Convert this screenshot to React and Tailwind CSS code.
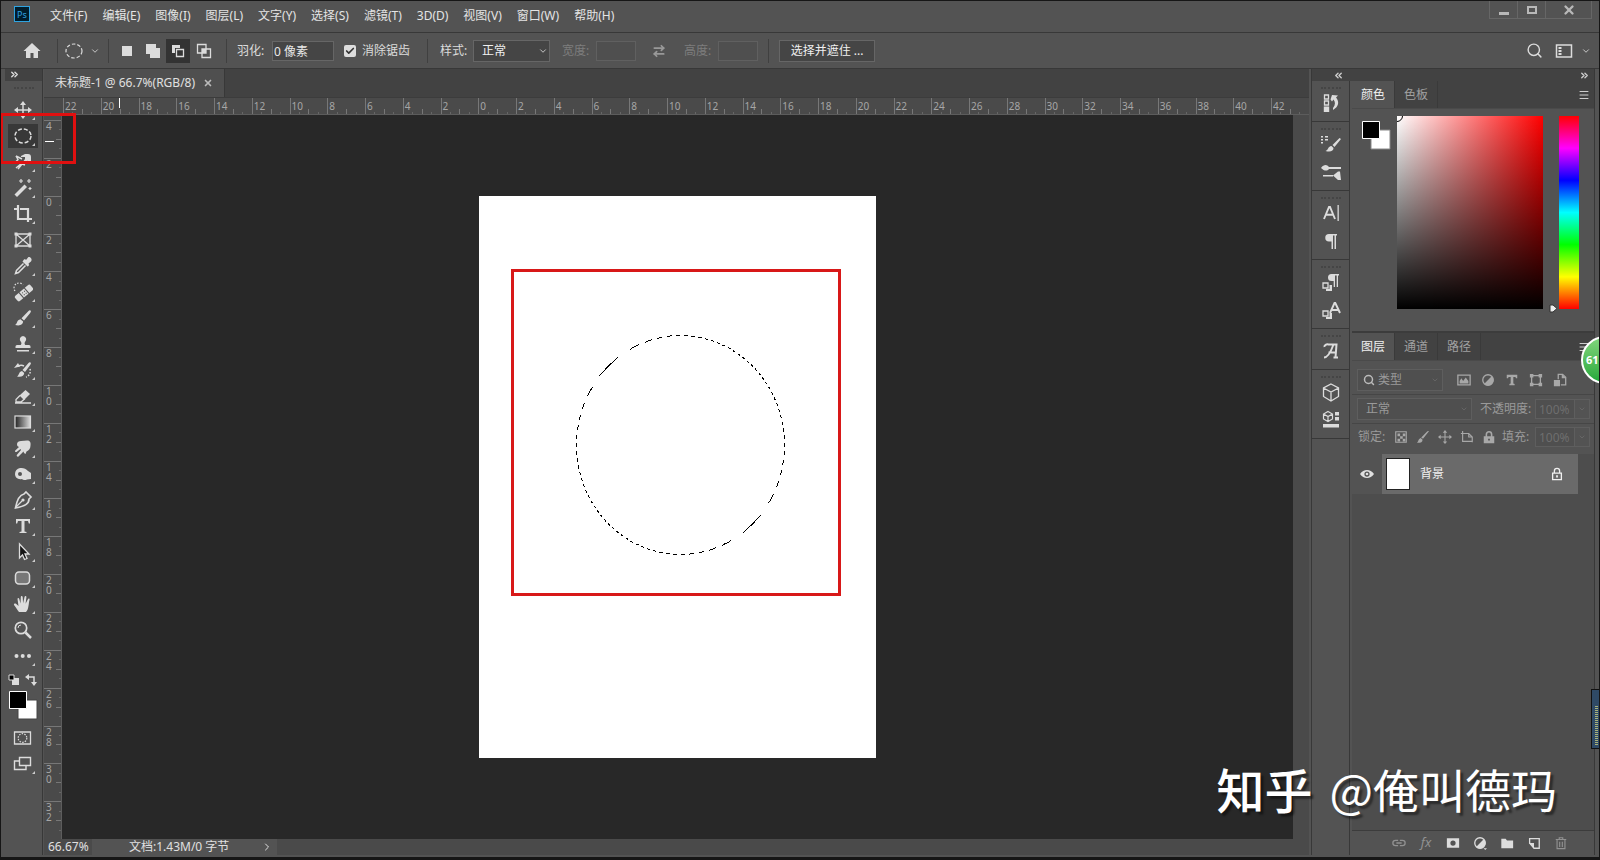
import React, { useState } from 'react';
import { ArrowRightLeft, Check, ChevronDown, ChevronRight, ChevronsLeft, ChevronsRight, Menu, Search, X } from 'lucide-react';

const menus = ['文件(F)', '编辑(E)', '图像(I)', '图层(L)', '文字(Y)', '选择(S)', '滤镜(T)', '3D(D)', '视图(V)', '窗口(W)', '帮助(H)'];

const hRuler = Array.from({ length: 33 }, (_, i) => Math.abs(i * 2 - 22));
const vRuler = Array.from({ length: 19 }, (_, i) => Math.abs(i * 2 - 4));

const line = { fill: 'none', stroke: 'currentColor', strokeWidth: 1.5 };

const Icon = ({ children, className = 'w-5 h-5', box = '0 0 20 20' }) => (
  <svg viewBox={box} className={`shrink-0 ${className}`} fill="currentColor" aria-hidden="true">{children}</svg>
);

const tools = [
  { name: '移动工具', art: <><path d="M10 4v12M3 10h14" {...line} /><path d="M10 1l3 4H7zM10 19l3-4H7zM1 10l4-3v6zM19 10l-4-3v6z" /></> },
  { name: '椭圆选框工具', art: <ellipse cx="10" cy="10" rx="8" ry="7" {...line} strokeDasharray="4 2" /> },
  { name: '套索工具', art: <><path d="M3 4l6 3M3 4l2 3.500-3 3 7 .5M5 17l4-5 3 1M9 11l-6 5" {...line} /><path fillRule="evenodd" d="M8 4l4-2h3a3 3 0 013 3v6h-3.500V8.500L12 11H9l3-4V5H8z" /></> },
  { name: '魔棒工具', art: <><path d="M1.500 16.500l10-10 2.500 2.500-10 10z" /><path d="M8 1v4M6 3h4M16 1v4M14 3h4M17 9v3M15.500 10.500h3" {...line} strokeWidth="1.200" /></> },
  { name: '裁剪工具', art: <path d="M5 1v14h10M1 5h3M7 5h8v13M16 15h3" {...line} strokeWidth="2.200" /> },
  { name: '图框工具', plain: true, art: <><path d="M3 4h14v12H3zM3 4l14 12M17 4L3 16" {...line} strokeWidth="1.300" /><path d="M1.500 2.500h3v3h-3zM15.500 2.500h3v3h-3zM1.500 14.500h3v3h-3zM15.500 14.500h3v3h-3z" /></> },
  { name: '吸管工具', art: <><path d="M11 3.500c1-.5 2 .5 2 .5l2-2.500c1.500-1.500 5 1.500 3 4L15.500 7.500s1 1.500 0 2.500l-1 .5-5-5z" /><path d="M10.500 7.500l-7 7-1 3 3-1 7-7" {...line} /></> },
  { name: '修复画笔', art: <><g transform="rotate(-40 11 11)"><path d="M3 7.500h4v7H3a2 2 0 01-2-2v-3a2 2 0 012-2zM15 7.500h4a2 2 0 012 2v3a2 2 0 01-2 2h-4z" /><path d="M8 7.500h6v7H8z" /><path d="M9.500 9.500h1v1h-1zM12 9.500h1v1h-1zM9.500 12h1v1h-1zM12 12h1v1h-1z" fill="#444" /></g><path d="M2 9a5 5 0 018-6" {...line} strokeDasharray="1.500 1.500" strokeWidth="1.200" /></> },
  { name: '画笔工具', art: <><path d="M17.500 2.500c1 .8 0 2-.5 2.700L11 12.500 8.500 10.300 15.500 3c.6-.6 1.300-1 2-.5z" /><path d="M7.500 11.200l2.600 2.400c0 3-3 4.800-8.100 3.400 2.500-1 1.500-5.200 5.500-5.800z" /></> },
  { name: '仿制图章', art: <><path d="M10 2a3.400 3.400 0 012 6c-.7 1-.5 2 .3 3H16a1.500 1.500 0 011.500 1.500V14h-15v-1.500A1.500 1.500 0 014 11h3.700c.8-1 1-2 .3-3a3.400 3.400 0 012-6z" /><path d="M4 16h12v1.500H4z" /></> },
  { name: '历史记录画笔', art: <><path d="M17.500 2.500c1 .8 0 2-.5 2.700L12 12l-2.500-2L15.500 3c.6-.6 1.300-1 2-.5zM9 11l2.200 2c0 3-3 4.500-7.200 3.500 2.300-1 1.500-4.700 5-5.500zM1 8l4-5 2 3.500z" /><path d="M5 6.500c2-1.500 4-1.500 6-.5" {...line} /><path d="M17 9c1 4-1 7-4 8" {...line} strokeDasharray="1.500 1.500" /></> },
  { name: '橡皮擦', art: <><path d="M12.500 4L17 8l-6 6-4.500-4.500z" /><path d="M7 9.500L3 13.500V16h5l4-3.500M2 17h16" {...line} strokeWidth="1.300" /></> },
  { name: '渐变工具', art: <><defs><linearGradient id="toolGrad"><stop offset="0" stopColor="#222" /><stop offset="1" stopColor="#ddd" /></linearGradient></defs><rect x="2" y="4" width="15.500" height="12" fill="url(#toolGrad)" stroke="currentColor" strokeWidth="1.200" /></> },
  { name: '涂抹工具', art: <path d="M4 6c0-2 2-3 4-3l6-.5c3 0 4 2 3.500 5 0 3-1.500 5-4 6l-1 2.500-1.500-1-.5-1.500-5 5c-1 .8-2.500-.5-1.500-1.700L8 12l-.5-1-4 3c-1.200.5-2-.8-1-1.700L6 9C4.500 8.500 4 7.500 4 6z" /> },
  { name: '减淡工具', art: <path fillRule="evenodd" d="M7 4c3-.5 6 .5 8 3l3 2v6l-4 .5c-2 1-4 .5-5-.5-4 1-7-1.500-7-5s2-5.500 5-6zm0 4a2 2 0 100 4 2 2 0 000-4z" /> },
  { name: '钢笔工具', art: <><path d="M13 2l5 5-2 2c0 5-4 7-13.500 9C4 10 6 5 11 4z" {...line} strokeWidth="1.700" /><path d="M3 17l6-6" {...line} strokeWidth="1.200" /><circle cx="10" cy="10" r="1.600" /></> },
  { name: '文字工具', art: <path d="M3 3h14v4.500h-1.200L15 5h-3.500v10.500l2 .5v1h-7v-1l2-.5V5H5l-.8 2.500H3z" /> },
  { name: '路径选择', art: <path d="M6.500 2v14l3-3 2 4.500 2.500-1-2-4.500h4z" fill="#151515" stroke="currentColor" strokeWidth="1.300" /> },
  { name: '圆角矩形', art: <rect x="2.500" y="4" width="14" height="12" rx="3.500" fill="#777" stroke="currentColor" strokeWidth="1.500" /> },
  { name: '抓手工具', art: <path d="M6 18c-2-2-3-5-5-7-.5-1.300 1-2 2-1.200L5.500 12 4.500 5c0-1.300 1.500-1.300 1.800 0L7.500 9.500 7.800 3c0-1.500 1.700-1.500 1.900 0l.4 6.200L11.500 3c.3-1.400 2-1.200 1.900.2l-.8 6.500 2.300-4.500c.6-1.200 2-.6 1.600.7C15.500 9 16 15 13 18z" /> },
  { name: '缩放工具', plain: true, art: <><circle cx="8" cy="8" r="5.700" {...line} strokeWidth="1.700" /><path d="M12.500 12.500L18 18" {...line} strokeWidth="2.500" /><path d="M5 8a3 3 0 013-3" {...line} strokeWidth="1" /></> },
  { name: '编辑工具栏', art: <><circle cx="3.500" cy="10" r="2" /><circle cx="9.700" cy="10" r="2" /><circle cx="16" cy="10" r="2" /></> },
];

const ToolButton = ({ tool, active, onClick }) => (
  <button aria-label={tool.name} onClick={onClick} className={`relative flex items-center justify-center w-[30px] h-[26px] shrink-0 border-y border-[#535353] ${active ? 'bg-[#383838]' : ''}`}>
    <Icon>{tool.art}</Icon>
    {!tool.plain && (
      <svg viewBox="0 0 4 4" className="absolute right-[3px] bottom-[2px] w-[3px] h-[3px]" fill="#ccc"><path d="M4 0v4H0z" /></svg>
    )}
  </button>
);

const styleBoxes = (
  <><path d="M2 11h5v5H2z" {...line} strokeWidth="1.300" /><path d="M8.500 13H11v6H5v-2h3.500z" /></>
);

const dockGroups = [
  [{ name: '历史记录', art: <><path d="M3.500 2h4v4h-4zM3.500 8h4v4h-4z" {...line} strokeWidth="1.300" /><path d="M2.800 13.500h5.400V19H2.800zM9.500 6.500L11 2l6 .5-2 2c3.500 4 3 9-3 12.500v-2c2.500-3 2.500-6 .5-8.500L11 8.500z" /></> }],
  [
    { name: '画笔设置', art: <><path d="M0 2h2v1.500H0zM4 2h3v1.500H4zM0 5h2v1.500H0zM4 5h3v1.500H4zM0 8h2v1.500H0z" /><path d="M20 5l-6.500 8-2-2 7-7zM10.500 12l2 2c0 3-3 4.500-8 3 3-.7 2-4.500 6-5z" /></> },
    { name: '画笔', art: <><path d="M0 6c3-4 6-3.500 8-1h12v2H8C6 9.500 3 9 0 6zM2 13h10v1.500H2zM12 13.500l5-4h2l1 8.500h-3z" /></> },
  ],
  [
    { name: '字符', art: <><path d="M3 16L8 4h1l5 12M5 11.700h7" {...line} strokeWidth="1.900" /><path d="M16.500 2h1.300v16h-1.300z" /></> },
    { name: '段落', art: <path d="M8 3h8v1.500h-1V18h-1.500V4.500H12V18h-1.500v-7.500H8A3.700 3.700 0 018 3z" /> },
  ],
  [
    { name: '段落样式', art: <><path d="M10.500 2H18v1.500h-1V15h-1.300V3.500H14V15h-1.300V9h-2.200a3.500 3.500 0 010-7z" />{styleBoxes}</> },
    { name: '字符样式', art: <><path d="M9 13L13.500 3h.8L19 13M11 10h6" {...line} strokeWidth="1.900" />{styleBoxes}</> },
  ],
  [{ name: '字形', art: <path d="M3.500 6c-.5-2 2-3 4-2.500h8L14.500 16.500M12.500 16.500h4.500M12.500 3.500C10.500 9 7 16.500 3 16.500M7.500 11.500h7" {...line} strokeWidth="2" /> }],
  [
    { name: '3D', art: <path d="M10 2l7.500 4v8.500L10 19l-7.500-4.500V6zM2.500 6l7.500 4 7.500-4M10 10v9" {...line} strokeWidth="1.300" /> },
    { name: '库', art: <><path d="M7 1.500l4.500 2.500v5L7 11.500 2.500 9V4zM2.500 4L7 6.500 11.500 4M7 6.500v5" {...line} strokeWidth="1.200" /><path d="M14 2h4v3.500h-4zM14 7h4v3.500h-4zM2 14h16v3.500H2z" /></> },
  ],
];

const Divider = ({ className = '' }) => <span className={`w-px h-6 bg-[#404040] shrink-0 ${className}`} />;

const Grip = () => <div className="h-2 w-5 mx-auto border-b-2 border-dotted border-[#454545]" />;

const MenuBar = () => (
  <header className="flex items-start h-8 border-b border-[#383838]">
    <div className="ml-[13px] mt-[5px] w-4 h-4 flex items-center justify-center border border-[#2fa3e0] bg-[#001d2c] text-[#2fa3e0] text-[9px] leading-none">Ps</div>
    <nav className="flex h-[29px] items-center gap-[15px] ml-5">
      {menus.map((item) => (
        <button key={item} className="text-[#e4e4e4]">{item}</button>
      ))}
    </nav>
    <div className="ml-auto mr-[7px] flex h-[18px] text-[#b8b8b8] border border-t-0 border-[#666]">
      <button aria-label="最小化" className="w-7 flex items-center justify-center border-r border-[#666]"><Icon className="w-3 h-3" box="0 0 12 12"><path d="M1 8h10v3H1z" /></Icon></button>
      <button aria-label="最大化" className="w-7 flex items-center justify-center border-r border-[#666]"><Icon className="w-3 h-3" box="0 0 12 12"><path d="M2 3h8v6H2z" fill="none" stroke="currentColor" strokeWidth="2" /></Icon></button>
      <button aria-label="关闭" className="w-[45px] flex items-center justify-center"><X className="w-[14px] h-[14px]" strokeWidth={4} /></button>
    </div>
  </header>
);

const OptionsBar = () => {
  const [feather, setFeather] = useState('0 像素');
  const [antialias, setAntialias] = useState(true);

  return (
    <div className="flex items-center h-9 text-[#dcdcdc] border-b border-[#383838]">
      <button aria-label="主页" className="ml-[21px]"><Icon><path d="M10 2l8.500 8H16v7h-4.500v-5h-3v5H4v-7H1.500z" /></Icon></button>
      <Divider className="ml-[15px]" />
      <button aria-label="工具预设" className="flex items-center ml-[6px] gap-[6px]">
        <Icon><ellipse cx="10" cy="10" rx="8" ry="7" {...line} strokeWidth="1.200" strokeDasharray="3.500 2" /></Icon>
        <ChevronDown className="w-[10px] h-[10px]" />
      </button>
      <Divider className="ml-2" />
      <button aria-label="新选区" className="ml-[5px] w-[26px] h-6 flex items-center justify-center"><Icon className="w-4 h-4" box="0 0 16 16"><path d="M3 3h10v10H3z" /></Icon></button>
      <button aria-label="添加到选区" className="w-[26px] h-6 flex items-center justify-center"><Icon className="w-4 h-4" box="0 0 16 16"><path d="M1 1h10v4h4v10H5v-4H1z" /></Icon></button>
      <button aria-label="从选区减去" className="w-6 h-6 flex items-center justify-center bg-[#333]"><Icon className="w-4 h-4" box="0 0 16 16"><path d="M2 2h8v3H5v5H2z" /><path d="M6.500 6.500h7v7h-7z" {...line} strokeWidth="1.300" /></Icon></button>
      <button aria-label="与选区交叉" className="w-7 h-6 flex items-center justify-center"><Icon className="w-4 h-4" box="0 0 16 16"><path d="M1.500 1.500h8.500V10H1.500zM6 6h8.500v8.500H6z" {...line} strokeWidth="1.300" /><path d="M6 6h4v4H6z" /></Icon></button>
      <Divider className="ml-2" />
      <label htmlFor="feather" className="ml-[10px] w-[35px]">羽化:</label>
      <input id="feather" value={feather} onChange={(e) => setFeather(e.target.value)} className="w-[62px] h-5 px-px bg-[#454545] border border-[#666] text-[#e8e8e8] outline-none" />
      <label className="flex items-center ml-[10px] gap-[6px]">
        <span className="grid place-items-center">
          <input type="checkbox" checked={antialias} onChange={() => setAntialias(!antialias)} className="appearance-none w-3 h-3 rounded-[2px] bg-[#ddd] col-start-1 row-start-1" />
          {antialias && <Check className="w-[10px] h-[10px] text-[#333] col-start-1 row-start-1 pointer-events-none" strokeWidth={4} />}
        </span>
        消除锯齿
      </label>
      <Divider className="ml-[17px]" />
      <label htmlFor="style" className="ml-3 w-[33px]">样式:</label>
      <span className="grid items-center">
        <select id="style" className="appearance-none col-start-1 row-start-1 w-[77px] h-[22px] px-2 bg-[#454545] border border-[#666] text-[#f0f0f0] outline-none">
          <option>正常</option>
        </select>
        <ChevronDown className="w-[10px] h-[10px] mr-[2px] justify-self-end col-start-1 row-start-1 pointer-events-none" />
      </span>
      <label htmlFor="width" className="ml-3 w-[34px] text-[#7d7d7d]">宽度:</label>
      <input id="width" disabled className="w-10 h-5 border border-[#606060] bg-[#4f4f4f]" />
      <ArrowRightLeft className="ml-4 w-[14px] h-[14px] text-[#999]" strokeWidth={3} />
      <label htmlFor="height" className="ml-[18px] w-[34px] text-[#7d7d7d]">高度:</label>
      <input id="height" disabled className="w-10 h-5 border border-[#606060] bg-[#4f4f4f]" />
      <Divider className="ml-[10px]" />
      <button className="ml-[10px] w-24 h-[22px] bg-[#454545] border border-[#666] text-[#f0f0f0]">选择并遮住 ...</button>
      <div className="ml-auto mr-2 flex items-center gap-3">
        <button aria-label="搜索"><Search className="w-[17px] h-[17px]" /></button>
        <button aria-label="工作区" className="flex items-center gap-2">
          <Icon className="w-[18px] h-[18px]" box="0 0 18 18"><path d="M1.500 3h15v12h-15z" {...line} /><path d="M3.500 5h3v2h-3zM3.500 8h3v2h-3zM3.500 11h3v2h-3z" /></Icon>
          <ChevronDown className="w-[10px] h-[10px]" />
        </button>
      </div>
    </div>
  );
};

const Toolbar = () => {
  const [active, setActive] = useState(1);

  return (
    <aside className="flex flex-col w-[38px] shrink-0 border-r border-[#383838] text-[#dcdcdc]">
      <div className="h-3 shrink-0 bg-[#424242]"><ChevronsRight className="ml-1 w-[11px] h-[11px]" strokeWidth={3} /></div>
      <div className="h-4 shrink-0"><Grip /></div>
      <div className="flex flex-col pl-[3px]">
        {tools.map((tool, i) => (
          <ToolButton key={tool.name} tool={tool} active={i === active} onClick={() => setActive(i)} />
        ))}
        <div className="flex items-center h-[21px] gap-[5px]">
          <button aria-label="默认颜色"><Icon className="w-3 h-3" box="0 0 12 12"><path d="M4 4h7v7H4z" /><path d="M1 1h5v5H1z" fill="#000" stroke="#ddd" /></Icon></button>
          <button aria-label="切换颜色"><Icon className="w-3 h-3" box="0 0 12 12"><path d="M3 3h6v6" {...line} /><path d="M0 3l4-3v6zM9 12L6 8h6z" /></Icon></button>
        </div>
        <button aria-label="前景色和背景色"><Icon className="w-[30px] h-[30px]" box="0 0 30 30"><path d="M10 10h19v19H10z" fill="#fff" stroke="#444" /><path d="M1.500 1.500h17v17h-17z" fill="#000" stroke="#fff" /></Icon></button>
        <div className="pt-[5px]">
          <ToolButton tool={{ name: '快速蒙版', plain: true, art: <><path d="M1.500 4h16v12h-16z" {...line} strokeWidth="1.300" /><circle cx="9.500" cy="10" r="4.300" {...line} strokeDasharray="1.500 1.200" strokeWidth="1.200" /></> }} />
          <ToolButton tool={{ name: '屏幕模式', art: <><path d="M6.500 3.500h11v8h-11zM6 7H1.500v8.500H13V12" {...line} strokeWidth="1.400" /></> }} />
        </div>
      </div>
    </aside>
  );
};

const MarchingAnts = () => (
  <svg className="absolute inset-0 w-full h-full" viewBox="0 0 397 562" shapeRendering="crispEdges">
    <defs>
      <linearGradient id="ants" gradientUnits="userSpaceOnUse" spreadMethod="repeat" x1="0.250" y1="0.250" x2="4.250" y2="4.250">
        <stop offset="0" stopColor="#000" />
        <stop offset="0.500" stopColor="#000" />
        <stop offset="0.500" stopColor="#fff" />
        <stop offset="1" stopColor="#fff" />
      </linearGradient>
    </defs>
    <ellipse cx="201.500" cy="249" rx="104" ry="109.500" fill="none" stroke="url(#ants)" />
  </svg>
);

const Workspace = () => (
  <main className="flex flex-col flex-1 min-w-0 ml-px">
    <div className="flex h-7 bg-[#424242]">
      <div className="flex items-center gap-2 px-[11px] bg-[#4f4f4f] text-[#e0e0e0] border-r border-[#383838]">
        未标题-1 @ 66.7%(RGB/8)
        <button aria-label="关闭文档"><X className="w-[10px] h-[10px] text-[#bbb]" strokeWidth={4} /></button>
      </div>
    </div>
    <div className="relative flex h-[18px] pl-[19px] bg-[#4a4a4a] border-y border-[#5c5c5c] border-t-[#3c3c3c] text-[10px] leading-4 text-[#a6a6a6] overflow-hidden">
      {hRuler.map((n, i) => (
        <div key={i} className="grid flex-1 min-w-0 border-l border-[#777]">
          <span className="col-start-1 row-start-1 pl-px">{n}</span>
          <span className="col-start-1 row-start-1 self-end flex items-end">
            <i className="flex-1" /><i className="flex-1 h-[2px] border-l border-[#666]" /><i className="flex-1 h-[5px] border-l border-[#777]" /><i className="flex-1 h-[2px] border-l border-[#666]" />
          </span>
        </div>
      ))}
      <span className="absolute left-[75px] top-0 w-px h-[10px] bg-white" />
    </div>
    <div className="flex flex-1 min-h-0">
      <div className="relative flex flex-col w-[18px] shrink-0 pt-[5px] bg-[#4a4a4a] border-r border-[#5c5c5c] text-[10px] leading-[10px] text-[#a6a6a6]">
        {vRuler.map((n, i) => (
          <div key={i} className="grid flex-1 min-h-0 border-t border-[#777]">
            <span className="col-start-1 row-start-1 ml-[2px] w-[7px] break-all">{n}</span>
            <span className="col-start-1 row-start-1 justify-self-end flex flex-col items-end">
              <i className="flex-1" /><i className="flex-1 w-[2px] border-t border-[#666]" /><i className="flex-1 w-[5px] border-t border-[#777]" /><i className="flex-1 w-[2px] border-t border-[#666]" />
            </span>
          </div>
        ))}
        <span className="absolute left-px top-[26px] w-[9px] h-px bg-white" />
      </div>
      <div className="flex flex-1 items-center justify-center bg-[#282828] overflow-hidden">
        <div className="relative w-[397px] h-[562px] shrink-0 bg-white">
          <MarchingAnts />
          <div className="absolute left-8 top-[73px] w-[330px] h-[327px] border-3 border-[#d81818]" />
        </div>
      </div>
      <div className="w-4 shrink-0 bg-[#4a4a4a]" />
    </div>
    <footer className="flex items-center h-4 bg-[#4a4a4a] text-[#e0e0e0]">
      <span className="w-12 pl-1">66.67%</span>
      <div className="flex items-center justify-between w-[185px] h-full pl-[37px] pr-1 bg-[#535353]">
        <span>文档:1.43M/0 字节</span>
        <button aria-label="文档信息"><ChevronRight className="w-3 h-3" /></button>
      </div>
    </footer>
  </main>
);

const Dock = () => (
  <div className="flex flex-col w-[38px] text-[#dcdcdc] border-r border-[#383838]">
    {dockGroups.map((group, i) => (
      <div key={i} className="flex flex-col items-center pb-1 border-b border-[#383838]">
        <Grip />
        {group.map((item) => (
          <button key={item.name} aria-label={item.name} className="h-7 flex items-center"><Icon>{item.art}</Icon></button>
        ))}
      </div>
    ))}
  </div>
);

const PanelTabs = ({ tabs }) => (
  <div role="tablist" className="flex items-stretch h-7 bg-[#424242] border-b border-[#4a4a4a]">
    {tabs.map((tab, i) => (
      <button key={tab} role="tab" aria-selected={i === 0} className={`px-[9px] border-r border-[#3a3a3a] ${i === 0 ? 'bg-[#535353] text-[#f0f0f0]' : 'text-[#a0a0a0]'}`}>{tab}</button>
    ))}
    <button aria-label="面板菜单" className="ml-auto mr-1"><Menu className="w-3 h-3 text-[#ccc]" /></button>
  </div>
);

const ColorPanel = () => (
  <section className="border-b-2 border-[#3c3c3c]">
    <PanelTabs tabs={['颜色', '色板']} />
    <div className="flex items-start pt-[7px] pb-[18px] pl-[9px]">
      <button aria-label="前景色和背景色" className="mt-1"><Icon className="w-[30px] h-[30px]" box="0 0 30 30"><path d="M10 10h19v19H10z" fill="#fff" stroke="#888" /><path d="M1.500 1.500h17v17h-17z" fill="#000" stroke="#fff" /></Icon></button>
      <div className="relative flex-1 h-[193px] ml-[6px] overflow-hidden bg-[linear-gradient(to_bottom,transparent,#000),linear-gradient(to_right,#fff,#f00)]">
        <span className="absolute -left-[6px] -top-[6px] w-3 h-3 rounded-full border border-black" />
      </div>
      <Icon className="w-[9px] h-[9px] ml-[6px] mt-[188px]" box="0 0 9 9"><path d="M1 1h3l4 3.500L4 8H1z" fill="#eee" stroke="#333" /></Icon>
      <div className="w-5 h-[193px] ml-px mr-[15px] bg-[linear-gradient(to_bottom,#f00,#f0f,#00f,#0ff,#0f0,#ff0,#f00)]" />
    </div>
  </section>
);

const PercentField = ({ id, label }) => (
  <>
    <label htmlFor={id}>{label}:</label>
    <span className="flex ml-auto">
      <input id={id} disabled value="100%" readOnly className="w-10 h-5 pl-[3px] border border-[#5e5e5e] bg-[#4f4f4f] text-[#6e6e6e]" />
      <button aria-label={`${label}滑块`} className="w-[15px] h-5 border border-l-0 border-[#5e5e5e] flex items-center justify-center"><ChevronDown className="w-2 h-2 text-[#707070]" /></button>
    </span>
  </>
);

const filterIcons = [
  { name: '像素图层', art: <><path d="M1 2.500h14v11H1z" {...line} /><path d="M3 12V9l2-3 2 3 3-4 3 4v3z" /></> },
  { name: '调整图层', art: <><circle cx="8" cy="8" r="6" {...line} /><path d="M12.500 3.500a6.300 6.300 0 01-9 9z" /></> },
  { name: '文字图层', art: <path d="M2 2h12v4h-1.500L12 4.500H9.500V12l1.500.5V14H5v-1.500l1.500-.5V4.500H4L3.500 6H2z" /> },
  { name: '形状图层', art: <><path d="M3 3h10v10H3z" {...line} /><path d="M1 1h4v4H1zM11 1h4v4h-4zM1 11h4v4H1zM11 11h4v4h-4z" /></> },
  { name: '智能对象', art: <><path d="M6 7V1.500h5L14.500 5v8.500H9" {...line} /><path d="M1 8h7v7H1zM10 1v5h5z" /></> },
];

const lockIcons = [
  { name: '锁定透明像素', art: <><path d="M2 2h12v12H2z" {...line} strokeWidth="1.300" /><path d="M4 4h3v3H4zM10 4h3v3h-3zM7 7h3v3H7zM4 10h3v3H4zM10 10h3v3h-3z" /></> },
  { name: '锁定图像像素', art: <path d="M15 1L8 10 6 8.500l7-7zM5.500 9l2 2c0 3-3 4-6.500 3.500C3 13 2.500 10 5.500 9z" /> },
  { name: '锁定位置', art: <><path d="M8 2v12M2 8h12" {...line} strokeWidth="1.200" /><path d="M8 0l2.500 3h-5zM8 16l2.500-3h-5zM0 8l3-2.500v5zM16 8l-3-2.500v5z" /></> },
  { name: '防止嵌套', art: <path d="M3 1v12h11M1 4h9l4 4v6M10 4v4h4" {...line} strokeWidth="1.300" /> },
  { name: '锁定全部', art: <><path d="M5 8V5a3 3 0 016 0v3" {...line} strokeWidth="1.800" /><path fillRule="evenodd" d="M2 7h12v8H2zm5 3v2h2v-2z" /></> },
];

const layerActions = [
  { name: '链接图层', dim: true, art: <path d="M7 5H4a3 3 0 000 6h3M9 5h3a3 3 0 010 6H9M5 8h6" {...line} /> },
  { name: '图层样式', dim: true, text: 'fx' },
  { name: '添加蒙版', art: <path fillRule="evenodd" d="M1 2.500h14v11H1zm7 2.500a3 3 0 100 6 3 3 0 000-6z" /> },
  { name: '调整图层', art: <><circle cx="8" cy="8" r="6" {...line} /><path d="M12.500 3.500a6.300 6.300 0 01-9 9zM12 14h4l-2 2z" /></> },
  { name: '新建组', art: <path d="M1.500 3h5l1.500 2h7v9H1.500z" /> },
  { name: '新建图层', art: <><path d="M3 8V3h11v11H8z" {...line} /><path d="M2 8h6v6z" /></> },
  { name: '删除图层', dim: true, art: <path d="M2 4h12M6 4V2h4v2M3.500 4.500v10h9v-10M6.500 6.500v6M9.500 6.500v6" {...line} strokeWidth="1.300" /> },
];

const LayersPanel = () => (
  <section className="flex flex-col flex-1 min-h-0 text-[#9a9a9a]">
    <PanelTabs tabs={['图层', '通道', '路径']} />
    <div className="flex items-center h-[34px] pt-1 pl-[5px] border-b border-[#464646]">
      <span className="grid items-center">
        <select aria-label="类型" className="appearance-none col-start-1 row-start-1 w-[86px] h-[22px] pl-5 bg-[#4f4f4f] border border-[#5e5e5e] outline-none"><option>类型</option></select>
        <Search className="w-3 h-3 ml-[6px] text-[#bbb] col-start-1 row-start-1 pointer-events-none" strokeWidth={3} />
        <ChevronDown className="w-2 h-2 mr-1 justify-self-end col-start-1 row-start-1 pointer-events-none text-[#707070]" />
      </span>
      <div className="flex items-center ml-[14px] gap-[10px] text-[#a8a8a8]">
        {filterIcons.map((item) => (
          <button key={item.name} aria-label={item.name}><Icon className="w-[14px] h-[14px]" box="0 0 16 16">{item.art}</Icon></button>
        ))}
      </div>
    </div>
    <div className="flex items-center h-[29px] pl-[5px] pr-1 border-b border-[#464646]">
      <span className="grid items-center mr-2">
        <select aria-label="混合模式" className="appearance-none col-start-1 row-start-1 w-[115px] h-[22px] px-2 bg-[#4f4f4f] border border-[#5e5e5e] outline-none"><option>正常</option></select>
        <ChevronDown className="w-2 h-2 mr-1 justify-self-end col-start-1 row-start-1 pointer-events-none text-[#707070]" />
      </span>
      <PercentField id="opacity" label="不透明度" />
    </div>
    <div className="flex items-center h-[30px] pb-1 pl-[6px] pr-1">
      <span className="w-9">锁定:</span>
      <div className="flex items-center gap-2 mr-[6px] text-[#a8a8a8]">
        {lockIcons.map((item) => (
          <button key={item.name} aria-label={item.name}><Icon className="w-[14px] h-[14px]" box="0 0 16 16">{item.art}</Icon></button>
        ))}
      </div>
      <PercentField id="fill" label="填充" />
    </div>
    <div className="flex-1 bg-[#4d4d4d]">
      <div className="flex items-stretch h-10 bg-[#535353] mr-4">
        <button aria-label="可见性" className="w-[30px] flex items-center justify-center text-[#e0e0e0]">
          <Icon className="w-[14px] h-[14px]" box="0 0 16 16"><path fillRule="evenodd" d="M0 8c4-6 12-6 16 0-4 6-12 6-16 0zm8-3a3 3 0 100 6 3 3 0 000-6z" /><circle cx="8" cy="8" r="1.500" /></Icon>
        </button>
        <div className="flex flex-1 items-center pl-1 pr-[14px] bg-[#6a6a6a] text-[#f0f0f0]">
          <span className="w-6 h-8 bg-white border border-[#222]" />
          <span className="ml-[10px]">背景</span>
          <Icon className="w-[14px] h-[14px] ml-auto" box="0 0 16 16"><path d="M5 7V4.500a3 3 0 016 0V7M3 7h10v7.500H3z" {...line} /><path d="M7 9.500h2v2.500H7z" /></Icon>
        </div>
      </div>
    </div>
    <div className="flex items-center justify-end gap-[13px] h-[25px] pr-[26px] border-t border-[#3c3c3c] text-[#dcdcdc]">
      {layerActions.map((item) => (
        <button key={item.name} aria-label={item.name} className={`w-[14px] ${item.dim ? 'text-[#919191]' : ''}`}>
          {item.text ? <span className="italic text-[13px] leading-none">{item.text}</span> : <Icon className="w-[14px] h-[14px]" box="0 0 16 16">{item.art}</Icon>}
        </button>
      ))}
    </div>
  </section>
);

const App = () => (
  <div className="relative flex flex-col h-screen overflow-hidden pb-[2px] bg-[#535353] border-t border-b-3 border-x border-[#161616] text-xs leading-4 font-['Noto_Sans','Noto_Sans_CJK_SC',sans-serif]">
    <MenuBar />
    <OptionsBar />
    <div className="flex flex-1 min-h-0 px-1">
      <Toolbar />
      <Workspace />
      <div className="flex flex-col w-[284px] shrink-0 ml-[2px] border-x border-[#383838]">
        <div className="flex items-center justify-between h-3 pl-[21px] pr-1 bg-[#424242] text-[#ccc]">
          <ChevronsLeft className="w-[11px] h-[11px]" strokeWidth={3} />
          <ChevronsRight className="w-[11px] h-[11px]" strokeWidth={3} />
        </div>
        <div className="flex flex-1 min-h-0">
          <Dock />
          <div className="flex flex-col flex-1 min-w-0 ml-[2px]">
            <ColorPanel />
            <LayersPanel />
          </div>
        </div>
      </div>
    </div>

    <div className="absolute -left-px top-28 w-[76px] h-[51px] border-3 border-[#e01010] pointer-events-none" />

    <div className="absolute -right-[30px] top-[335px] w-12 h-12 rounded-full border-2 border-white bg-linear-to-b from-[#7fd67c] to-[#1fa83a] flex items-center pl-[3px] text-white text-[11px] font-bold">61</div>
    <div className="absolute -right-px top-[688px] w-[9px] h-[60px] border border-r-0 border-[#111] bg-[#2f4a66] pt-4 pl-[3px]">
      <div className="w-[3px] h-10 bg-[repeating-linear-gradient(to_bottom,#a9b27a_0_1px,#2f4a66_1px_2px)]" />
    </div>

    <div className="absolute right-[42px] bottom-[39px] flex items-center gap-[17px] text-white text-[46px] leading-[60px] whitespace-nowrap pointer-events-none font-['Noto_Sans_CJK_SC',sans-serif] [text-shadow:3px_3px_2px_rgba(0,0,0,0.45)]">
      <span className="text-5xl leading-[60px] font-medium">知乎</span>
      <span>@俺叫德玛</span>
    </div>
  </div>
);

export default App;
